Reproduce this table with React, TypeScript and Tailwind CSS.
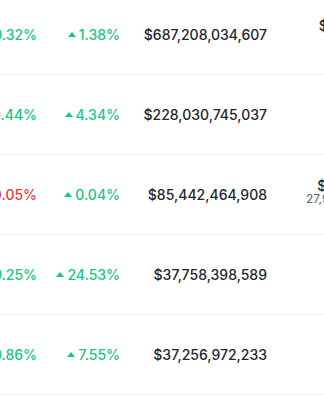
const rows = [
  { h1: '0.32', h1Up: true, d7: '1.38%', cap: '$687,208,034,607', vol: '$21,114,350,218', volSub: '571,355 BTC' },
  { h1: '0.44', h1Up: true, d7: '4.34%', cap: '$228,030,745,037', vol: '$954,207,337', volSub: '513,120 ETH' },
  { h1: '0.05', h1Up: false, d7: '0.04%', cap: '$85,442,464,908', vol: '$27,911,519,258', volSub: '27,941,681,130 USDT' },
  { h1: '9.25', h1Up: true, d7: '24.53%', cap: '$37,758,398,589', vol: '$924,833,901', volSub: '2,483,112 SOL' },
  { h1: '0.86', h1Up: true, d7: '7.55%', cap: '$37,256,972,233', vol: '$583,004,672', volSub: '412,945 ADA' },
]

function Caret({ up }: { up: boolean }) {
  return (
    <svg width="8" height="5" viewBox="0 0 8 5" className="mr-[3px] shrink-0" fill="currentColor">
      {up ? <path d="M4 0 L8 5 H0 Z" /> : <path d="M4 5 L8 0 H0 Z" />}
    </svg>
  )
}

export default function App() {
  return (
    <div className="h-[400px] w-[324px] overflow-hidden bg-white" style={{ fontFamily: "Inter, 'Liberation Sans', sans-serif" }}>
      <div className="-ml-[65px] -mt-[5px] w-[560px]">
        {rows.map((r) => (
          <div key={r.cap} className="flex h-[80px] items-center border-b border-[#eff2f5] text-[14px] font-medium">
            <div className={`flex w-[102px] items-center justify-end ${r.h1Up ? 'text-[#16c784]' : 'text-[#ea3943]'}`}>
              <Caret up={r.h1Up} />
              <span>{r.h1}%</span>
            </div>
            <div className="flex w-[83px] items-center justify-end text-[#16c784]">
              <Caret up />
              <span>{r.d7}</span>
            </div>
            <div className="w-[147px] text-right text-[#222531]">{r.cap}</div>
            <div className="flex w-[156px] flex-col items-end pb-[5px]">
              <span className="leading-[16px] text-[#222531]">{r.vol}</span>
              <span className="-mt-[2px] text-[12px] font-normal leading-[14px] text-[#58667e]">{r.volSub}</span>
            </div>
          </div>
        ))}
      </div>
    </div>
  )
}
